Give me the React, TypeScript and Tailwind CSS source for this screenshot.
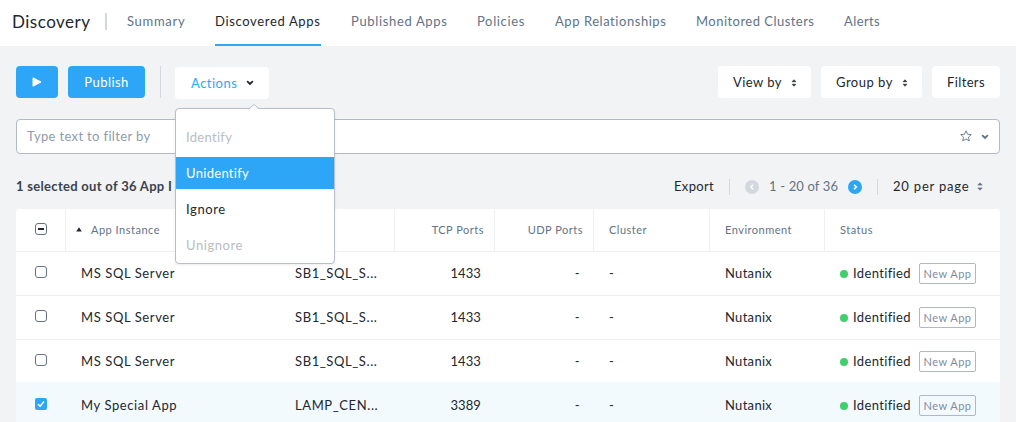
import React from "react";

const tabs = [
  { label: "Summary", cls: "w-[58px] tracking-[0.7px]" },
  { label: "Discovered Apps", cls: "w-[106px] tracking-[0.66px]", active: true },
  { label: "Published Apps", cls: "w-[96px] tracking-[0.65px]" },
  { label: "Policies", cls: "w-[48px] tracking-[0.65px]" },
  { label: "App Relationships", cls: "w-[111px] tracking-[0.55px]" },
  { label: "Monitored Clusters", cls: "w-[118px] tracking-[0.47px]" },
  { label: "Alerts", cls: "w-[36px] tracking-[0.4px]" },
];

const rows = [
  { name: "MS SQL Server", vm: "SB1_SQL_S...", tcp: "1433", selected: false },
  { name: "MS SQL Server", vm: "SB1_SQL_S...", tcp: "1433", selected: false },
  { name: "MS SQL Server", vm: "SB1_SQL_S...", tcp: "1433", selected: false },
  { name: "My Special App", vm: "LAMP_CEN...", tcp: "3389", selected: true },
];

const GRID = "grid grid-cols-[50px_214px_115px_100px_99px_116px_115px_175px]";

function Chevron({ className }: { className: string }) {
  return (
    <svg width="8" height="6" viewBox="0 0 8 6" fill="none" stroke="currentColor" strokeWidth="1.8" className={className}>
      <path d="M1.6 1.6 4 3.9 6.4 1.6" strokeLinecap="round" />
    </svg>
  );
}

function UpDown({ className }: { className: string }) {
  return (
    <svg width="6" height="9" viewBox="0 0 6 9" fill="currentColor" stroke="currentColor" strokeWidth="0.6" strokeLinejoin="round" className={className}>
      <path d="M0.8 3.1 3 0.8 5.2 3.1ZM0.8 5.9 3 8.2 5.2 5.9Z" />
    </svg>
  );
}

function Checkbox({ state }: { state: "off" | "on" | "mixed" }) {
  if (state === "on") {
    return (
      <span className="flex h-3 w-3 items-center justify-center rounded-[2px] bg-[#2ea6f7]">
        <svg width="8" height="8" viewBox="0 0 8 8" fill="none" stroke="white" strokeWidth="1.5">
          <path d="M1 4.3 3.1 6.2 7 1.6" />
        </svg>
      </span>
    );
  }
  return (
    <span className="flex h-3 w-3 items-center justify-center rounded-[3px] border border-[#627386] bg-white">
      {state === "mixed" && <span className="h-[2px] w-[6px] bg-[#22272e]" />}
    </span>
  );
}

function PageArrow({ next }: { next?: boolean }) {
  return (
    <svg width="14" height="14" viewBox="0 0 14 14" fill="none" className="shrink-0">
      <circle cx="7" cy="7" r="7" fill={next ? "#2ea6f7" : "#d3d7de"} />
      <path d={next ? "M6 4.7 8.3 7 6 9.3" : "M8 4.7 5.7 7 8 9.3"} stroke="white" strokeWidth="1.6" />
    </svg>
  );
}

function HeaderCell({ children, className = "" }: { children?: React.ReactNode; className?: string }) {
  return <div className={`flex items-center border-r border-[#f0f1f3] ${className}`}>{children}</div>;
}

export default function App() {
  return (
    <div className="h-[422px] w-[1016px] overflow-hidden whitespace-nowrap bg-[#f2f3f5] font-['Lato','Open_Sans',sans-serif] text-[13px] text-[#22272e]">
      <header className="flex h-[46px] items-stretch bg-white pl-3">
        <h1 className="w-[93px] pt-[9px] text-[17px] leading-[26px] tracking-[0.5px]">Discovery</h1>
        <div className="mt-[13px] h-[17px] w-[2px] bg-[#d3d7de]" />
        <nav className="ml-5 flex gap-[30px]">
          {tabs.map((t) => (
            <a
              key={t.label}
              className={`${t.cls} pt-[11px] leading-5 ${t.active ? "border-b-2 border-[#2ea6f7] text-[#22272e]" : "text-[#627386]"}`}
            >
              {t.label}
            </a>
          ))}
        </nav>
      </header>

      <main className="px-4 pt-5">
        <div className="flex h-8">
          <button className="flex w-[42px] items-center justify-center rounded-[4px] bg-[#2ea6f7]">
            <svg width="10" height="10" viewBox="0 0 10 10" fill="white" stroke="white" strokeLinejoin="round">
              <path d="M1 0.8 9 5 1 9.2Z" />
            </svg>
          </button>
          <button className="ml-[10px] w-[77px] rounded-[4px] bg-[#2ea6f7] pt-[2px] tracking-[0.45px] text-white">Publish</button>
          <div className="ml-[15px] w-px bg-[#d3d7de]" />
          <div className="relative ml-[14px] mt-px h-8 w-[94px]">
            <button className="flex h-8 w-full items-center rounded-[4px] bg-white pl-4 text-[#2ea6f7]">
              <span className="w-[55px] pt-[2px] text-left tracking-[0.5px]">Actions</span>
              <Chevron className="text-[#22272e]" />
            </button>
            <div className="absolute left-0 top-[41px] z-10 flex h-[156px] w-[160px] flex-col gap-1 rounded-[4px] border border-[#b8bfca] bg-white pt-3 leading-8 tracking-[0.3px] shadow-[0_1px_3px_rgba(0,0,0,0.08)]">
              <svg width="12" height="6" viewBox="0 0 12 6" className="absolute -top-[5px] left-[72px]">
                <path d="M1 5.5 6 0.8 11 5.5V6H1Z" fill="white" />
                <path d="M0.5 4.8 6 0.6 11.5 4.8" fill="none" stroke="#b8bfca" />
              </svg>
              <div className="h-8 pl-[10px] text-[#b9bdc1]">Identify</div>
              <div className="h-8 bg-[#2ea6f7] pl-[10px] text-white">Unidentify</div>
              <div className="h-8 pl-[10px] tracking-[0.6px]">Ignore</div>
              <div className="h-8 pl-[10px] tracking-[0.55px] text-[#b9bdc1]">Unignore</div>
            </div>
          </div>
          <div className="ml-auto flex gap-[10px]">
            <button className="flex w-[93px] items-center rounded-[4px] bg-white pl-[15px]">
              <span className="w-[58px] pt-[2px] text-left tracking-[0.45px]">View by</span>
              <UpDown className="mt-[2px] h-2 w-[6px]" />
            </button>
            <button className="flex w-[101px] items-center rounded-[4px] bg-white pl-[15px]">
              <span className="w-[66px] pt-[2px] text-left tracking-[0.5px]">Group by</span>
              <UpDown className="mt-[2px] h-2 w-[6px]" />
            </button>
            <button className="w-[68px] rounded-[4px] bg-white pt-[2px] tracking-[0.35px]">Filters</button>
          </div>
        </div>

        <div className="mt-[21px] flex h-[35px] items-center rounded-[4px] border border-[#b3bac5] bg-white pl-[10px] pr-[10px] text-[#8f9bac]">
          <span className="flex-1 tracking-[0.35px]">Type text to filter by</span>
          <svg width="12" height="12" viewBox="0 0 12 12" fill="none" stroke="#627386" strokeWidth="0.9" className="mb-[2px] mr-[9px]">
            <path d="M6 .8 7.5 4.2 11.3 4.6 8.5 7.1 9.3 10.9 6 9 2.7 10.9 3.5 7.1 .7 4.6 4.5 4.2Z" />
          </svg>
          <Chevron className="text-[#627386]" />
        </div>

        <div className="mt-[22px] flex h-[21px] items-center">
          <span className="w-[159px] overflow-hidden font-bold tracking-[0.3px] text-[#3a424d]">1 selected out of 36 App I</span>
          <span className="ml-auto w-[55px] tracking-[0.35px]">Export</span>
          <div className="h-4 w-px bg-[#d3d7de]" />
          <div className="ml-[15px] flex items-center">
            <PageArrow />
            <span className="ml-[10px] w-[79px] tracking-[0.15px] text-[#627386]">1 - 20 of 36</span>
            <PageArrow next />
          </div>
          <div className="ml-[15px] h-4 w-px bg-[#d3d7de]" />
          <span className="ml-[15px] w-[84px] tracking-[0.8px]">20 per page</span>
          <UpDown className="mr-[17px] text-[#627386]" />
        </div>

        <section className="mt-3 overflow-hidden rounded-t-[4px] bg-white">
          <div className={`${GRID} h-[43px] border-b border-[#eef0f2] text-[11px] tracking-[0.5px] text-[#627386]`}>
            <HeaderCell className="pb-[2px] pl-[19px]"><Checkbox state="mixed" /></HeaderCell>
            <HeaderCell className="pl-[10px] pt-px">
              <svg width="6" height="5" viewBox="0 0 6 5" fill="#22272e" className="mb-[2px] mr-[9px]"><path d="M3 .3 5.8 4.5H.2Z" /></svg>
              App Instance
            </HeaderCell>
            <HeaderCell />
            <HeaderCell className="justify-end pr-[10px] pt-px">TCP Ports</HeaderCell>
            <HeaderCell className="justify-end pr-[10px] pt-px">UDP Ports</HeaderCell>
            <HeaderCell className="pl-[15px] pt-px">Cluster</HeaderCell>
            <HeaderCell className="pl-[15px] pt-px">Environment</HeaderCell>
            <HeaderCell className="border-r-0 pl-[15px] pt-px">Status</HeaderCell>
          </div>
          {rows.map((r, i) => (
            <div
              key={i}
              className={`${GRID} items-center tracking-[0.3px] ${r.selected ? "-mt-[2px] h-[46px] bg-[#f2fafe] pb-px pt-[2px]" : "h-11 border-b border-[#eef0f2]"}`}
            >
              <div className="pb-[3px] pl-[19px]"><Checkbox state={r.selected ? "on" : "off"} /></div>
              <div className="pl-[15px] tracking-[0.6px]">{r.name}</div>
              <div className="pl-[15px] tracking-[0.6px]">{r.vm}</div>
              <div className="pr-[14px] text-right tracking-[0.1px]">{r.tcp}</div>
              <div className="pr-[14px] text-right">-</div>
              <div className="pl-[15px]">-</div>
              <div className="pl-[15px]">Nutanix</div>
              <div className="flex items-center pl-[15px]">
                <span className="h-2 w-2 rounded-full bg-[#40cf6b]" />
                <span className="ml-[5px] w-[66px] pt-px tracking-[0.35px]">Identified</span>
                <span className="flex h-[21px] w-[57px] items-center justify-center rounded-[2px] border border-[#b0b8c4] pt-px text-[11px] tracking-[0.5px] text-[#7f8d9f]">New App</span>
              </div>
            </div>
          ))}
        </section>
      </main>
    </div>
  );
}
